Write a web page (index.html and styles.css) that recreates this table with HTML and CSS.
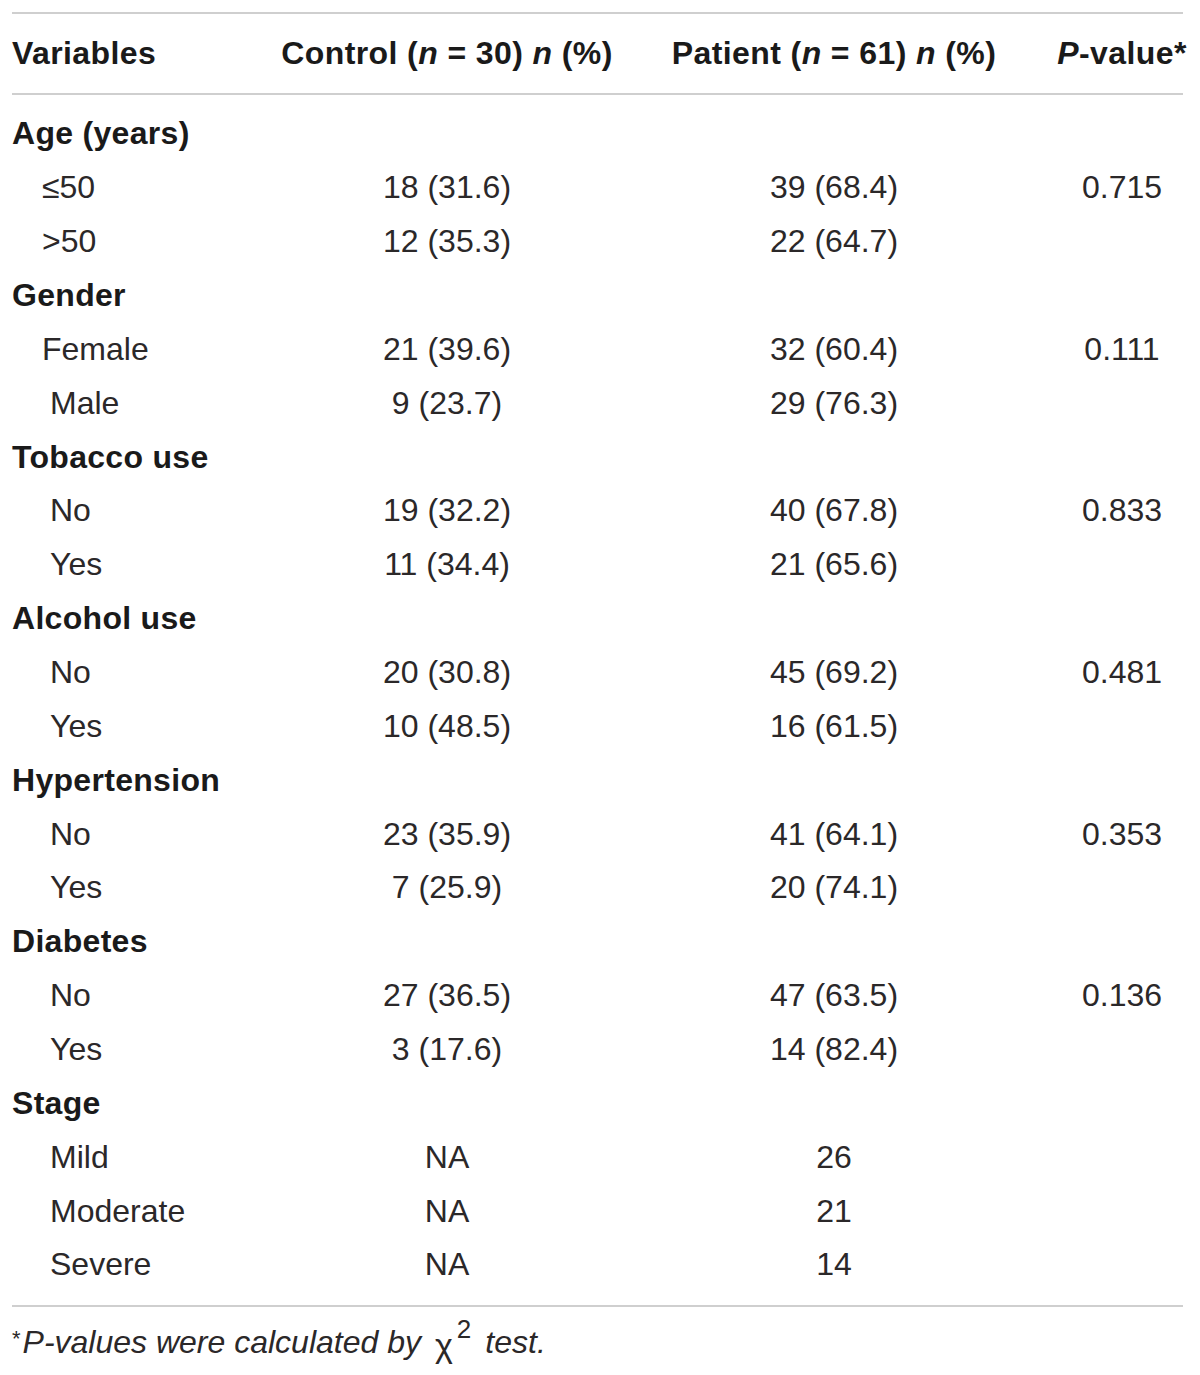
FILE: index.html
```html
<!DOCTYPE html>
<html lang="en">
<head>
    <meta charset="UTF-8">
    <title>Patient characteristics</title>
    <link rel="stylesheet" href="styles.css">
</head>
<body>
    <div class="table">
        <div class="row head">
            <div class="cell label">Variables</div>
            <div class="cell">Control (<i>n</i> = 30) <i>n</i> (%)</div>
            <div class="cell">Patient (<i>n</i> = 61) <i>n</i> (%)</div>
            <div class="cell"><i>P</i>-value*</div>
        </div>

        <div class="body">
            <div class="row group"><div class="cell label">Age (years)</div></div>
            <div class="row">
                <div class="cell label sub">&le;50</div>
                <div class="cell">18 (31.6)</div>
                <div class="cell">39 (68.4)</div>
                <div class="cell">0.715</div>
            </div>
            <div class="row">
                <div class="cell label sub">&gt;50</div>
                <div class="cell">12 (35.3)</div>
                <div class="cell">22 (64.7)</div>
                <div class="cell"></div>
            </div>

            <div class="row group"><div class="cell label">Gender</div></div>
            <div class="row">
                <div class="cell label sub">Female</div>
                <div class="cell">21 (39.6)</div>
                <div class="cell">32 (60.4)</div>
                <div class="cell">0.111</div>
            </div>
            <div class="row">
                <div class="cell label sub deep">Male</div>
                <div class="cell">9 (23.7)</div>
                <div class="cell">29 (76.3)</div>
                <div class="cell"></div>
            </div>

            <div class="row group"><div class="cell label">Tobacco use</div></div>
            <div class="row">
                <div class="cell label sub deep">No</div>
                <div class="cell">19 (32.2)</div>
                <div class="cell">40 (67.8)</div>
                <div class="cell">0.833</div>
            </div>
            <div class="row">
                <div class="cell label sub deep">Yes</div>
                <div class="cell">11 (34.4)</div>
                <div class="cell">21 (65.6)</div>
                <div class="cell"></div>
            </div>

            <div class="row group"><div class="cell label">Alcohol use</div></div>
            <div class="row">
                <div class="cell label sub deep">No</div>
                <div class="cell">20 (30.8)</div>
                <div class="cell">45 (69.2)</div>
                <div class="cell">0.481</div>
            </div>
            <div class="row">
                <div class="cell label sub deep">Yes</div>
                <div class="cell">10 (48.5)</div>
                <div class="cell">16 (61.5)</div>
                <div class="cell"></div>
            </div>

            <div class="row group"><div class="cell label">Hypertension</div></div>
            <div class="row">
                <div class="cell label sub deep">No</div>
                <div class="cell">23 (35.9)</div>
                <div class="cell">41 (64.1)</div>
                <div class="cell">0.353</div>
            </div>
            <div class="row">
                <div class="cell label sub deep">Yes</div>
                <div class="cell">7 (25.9)</div>
                <div class="cell">20 (74.1)</div>
                <div class="cell"></div>
            </div>

            <div class="row group"><div class="cell label">Diabetes</div></div>
            <div class="row">
                <div class="cell label sub deep">No</div>
                <div class="cell">27 (36.5)</div>
                <div class="cell">47 (63.5)</div>
                <div class="cell">0.136</div>
            </div>
            <div class="row">
                <div class="cell label sub deep">Yes</div>
                <div class="cell">3 (17.6)</div>
                <div class="cell">14 (82.4)</div>
                <div class="cell"></div>
            </div>

            <div class="row group"><div class="cell label">Stage</div></div>
            <div class="row">
                <div class="cell label sub deep">Mild</div>
                <div class="cell">NA</div>
                <div class="cell">26</div>
                <div class="cell"></div>
            </div>
            <div class="row">
                <div class="cell label sub deep">Moderate</div>
                <div class="cell">NA</div>
                <div class="cell">21</div>
                <div class="cell"></div>
            </div>
            <div class="row">
                <div class="cell label sub deep">Severe</div>
                <div class="cell">NA</div>
                <div class="cell">14</div>
                <div class="cell"></div>
            </div>
        </div>
    </div>

    <p class="note"><span class="star">*</span><i>P-values were calculated by</i><span class="chi">&chi;</span><sup>2</sup><i>test.</i></p>
</body>
</html>
```

FILE: styles.css
```css
body {
    margin: 0;
    padding: 12px 17px 0 12px;
    background: #ffffff;
    color: #2b2829;
    font-family: "Liberation Sans", Arial, sans-serif;
    font-size: 32px;
}
.table {
    border-top: 2px solid #cfcfcf;
    border-bottom: 2px solid #cfcfcf;
}
.row {
    display: grid;
    grid-template-columns: 241px 388px 386px 190px;
    align-items: center;
    height: 53.86px;
}
.cell {
    text-align: center;
    white-space: nowrap;
}
.cell.label {
    text-align: left;
}
.head {
    height: 79px;
    font-weight: bold;
    color: #1a1a1a;
    letter-spacing: 0.4px;
    border-bottom: 2px solid #cfcfcf;
}
.body {
    padding: 12px 0 13px;
}
.group {
    font-weight: bold;
    color: #1a1a1a;
    letter-spacing: 0.3px;
}
.sub {
    padding-left: 30px;
}
.sub.deep {
    padding-left: 38px;
}
.note {
    margin: 0;
    padding-top: 17px;
    white-space: nowrap;
}
.star {
    font-size: 22px;
    vertical-align: 7px;
    margin-right: 2px;
}
.chi {
    font-size: 34px;
    margin-left: 14px;
    vertical-align: -4px;
}
.note sup {
    font-size: 26px;
    vertical-align: 15px;
    line-height: 0;
    margin: 0 14px 0 4px;
}
```
